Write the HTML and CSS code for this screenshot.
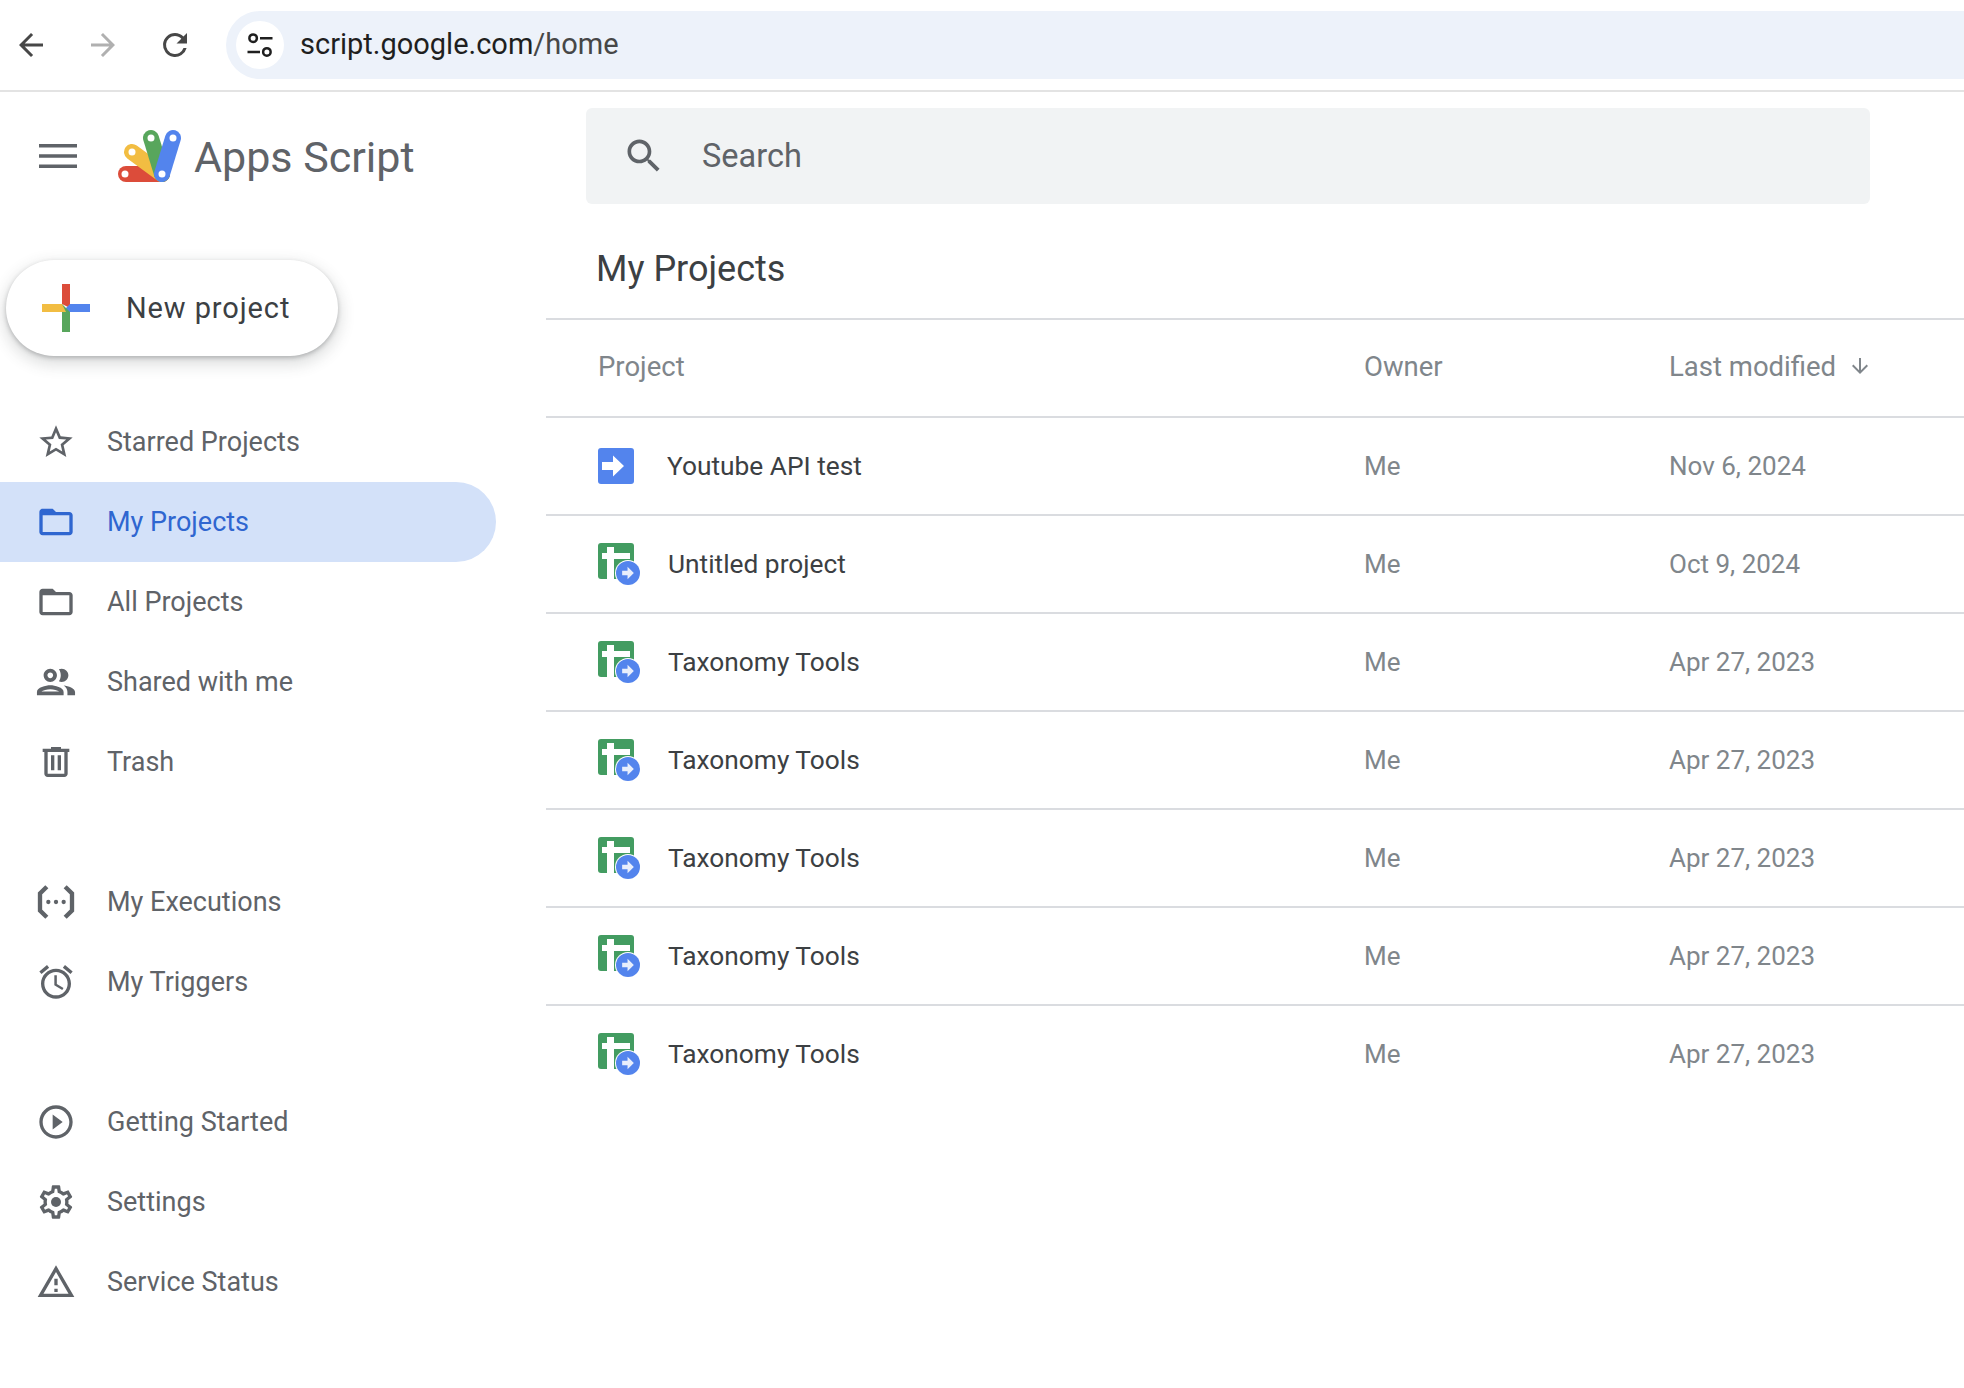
FILE: index.html
```html
<!DOCTYPE html>
<html lang="en">
<head>
    <meta charset="UTF-8">
    <meta name="viewport" content="width=device-width, initial-scale=1.0">
    <title>Apps Script</title>
    <link rel="stylesheet" href="styles.css">
</head>
<body>

    <svg class="icon-defs" width="0" height="0" aria-hidden="true">
        <symbol id="i-star" viewBox="0 0 24 24"><path d="M22 9.24l-7.19-.62L12 2 9.19 8.63 2 9.24l5.46 4.73L5.82 21 12 17.27 18.18 21l-1.63-7.03L22 9.24zM12 15.4l-3.76 2.27 1-4.28-3.32-2.88 4.38-.38L12 6.1l1.71 4.04 4.38.38-3.32 2.88 1 4.28L12 15.4z"/></symbol>
        <symbol id="i-folder" viewBox="0 0 24 24"><path d="M20 6h-8l-2-2H4c-1.1 0-1.99.9-1.99 2L2 18c0 1.1.9 2 2 2h16c1.1 0 2-.9 2-2V8c0-1.1-.9-2-2-2zm0 12H4V8h16v10z"/></symbol>
        <symbol id="i-people" viewBox="1.5 1.5 21 21"><path d="M9 13.75c-2.34 0-7 1.17-7 3.5V19h14v-1.75c0-2.33-4.66-3.5-7-3.5zM4.34 17c.84-.58 2.87-1.25 4.66-1.25s3.82.67 4.66 1.25H4.34zM9 12c1.93 0 3.5-1.57 3.5-3.5S10.93 5 9 5 5.5 6.57 5.5 8.5 7.07 12 9 12zm0-5c.83 0 1.5.67 1.5 1.5S9.83 10 9 10s-1.5-.67-1.5-1.5S8.17 7 9 7zm7.04 6.81c1.16.84 1.96 1.96 1.96 3.44V19h4v-1.75c0-2.02-3.5-3.17-5.96-3.44zM15 12c1.93 0 3.5-1.57 3.5-3.5S16.93 5 15 5c-.54 0-1.04.13-1.5.35.63.89 1 1.98 1 3.15s-.37 2.26-1 3.15c.46.22.96.35 1.5.35z"/></symbol>
        <symbol id="i-trash" viewBox="0 0 24 24"><path d="M15 3H9v1H4v2h1v13c0 1.1.9 2 2 2h10c1.1 0 2-.9 2-2V6h1V4h-5V3zm2 16H7V6h10v13zM9 8h2v9H9V8zm4 0h2v9h-2V8z"/></symbol>
        <symbol id="i-exec" viewBox="0 0 24 24"><path d="M6.5 2.8L2.4 6.9v10.2l4.1 4.1M17.5 2.8l4.1 4.1v10.2l-4.1 4.1" fill="none" stroke="currentColor" stroke-width="2.6"/><circle cx="7.4" cy="12" r="1.3"/><circle cx="12" cy="12" r="1.3"/><circle cx="16.6" cy="12" r="1.3"/></symbol>
        <symbol id="i-alarm" viewBox="0 0 24 24"><path d="M22 5.72l-4.6-3.86-1.29 1.53 4.6 3.86L22 5.72zM7.88 3.39L6.6 1.86 2 5.71l1.29 1.53 4.59-3.85zM12.5 8H11v6l4.75 2.85.75-1.23-4-2.37V8zM12 4c-4.97 0-9 4.03-9 9s4.02 9 9 9c4.97 0 9-4.03 9-9s-4.03-9-9-9zm0 16c-3.87 0-7-3.13-7-7s3.13-7 7-7 7 3.13 7 7-3.13 7-7 7z"/></symbol>
        <symbol id="i-play" viewBox="0 0 24 24"><path d="M10 16.5l6-4.5-6-4.5v9zM12 2C6.48 2 2 6.48 2 12s4.48 10 10 10 10-4.48 10-10S17.52 2 12 2zm0 18c-4.41 0-8-3.59-8-8s3.59-8 8-8 8 3.59 8 8-3.59 8-8 8z"/></symbol>
        <symbol id="i-gear" viewBox="0 0 24 24"><path d="M19.43 12.98c.04-.32.07-.64.07-.98 0-.34-.03-.66-.07-.98l2.11-1.65c.19-.15.24-.42.12-.64l-2-3.46c-.09-.16-.26-.25-.44-.25-.06 0-.12.01-.17.03l-2.49 1c-.52-.4-1.08-.73-1.69-.98l-.38-2.65C14.46 2.18 14.25 2 14 2h-4c-.25 0-.46.18-.49.42l-.38 2.65c-.61.25-1.17.59-1.69.98l-2.49-1c-.06-.02-.12-.03-.18-.03-.17 0-.34.09-.43.25l-2 3.46c-.13.22-.07.49.12.64l2.11 1.65c-.04.32-.07.65-.07.98 0 .33.03.66.07.98l-2.11 1.65c-.19.15-.24.42-.12.64l2 3.46c.09.16.26.25.44.25.06 0 .12-.01.17-.03l2.49-1c.52.4 1.08.73 1.69.98l.38 2.65c.03.24.24.42.49.42h4c.25 0 .46-.18.49-.42l.38-2.65c.61-.25 1.17-.59 1.69-.98l2.49 1c.06.02.12.03.18.03.17 0 .34-.09.43-.25l2-3.46c.12-.22.07-.49-.12-.64l-2.11-1.65zm-1.98-1.71c.04.31.05.52.05.73 0 .21-.02.43-.05.73l-.14 1.13.89.7 1.08.84-.7 1.21-1.27-.51-1.04-.42-.9.68c-.43.32-.84.56-1.25.73l-1.06.43-.16 1.13-.2 1.35h-1.4l-.19-1.35-.16-1.13-1.06-.43c-.43-.18-.83-.41-1.23-.71l-.91-.7-1.06.43-1.27.51-.7-1.21 1.08-.84.89-.7-.14-1.13c-.03-.31-.05-.54-.05-.74s.02-.43.05-.73l.14-1.13-.89-.7-1.08-.84.7-1.21 1.27.51 1.04.42.9-.68c.43-.32.84-.56 1.25-.73l1.06-.43.16-1.13.2-1.35h1.39l.19 1.35.16 1.13 1.06.43c.43.18.83.41 1.23.71l.91.7 1.06-.43 1.27-.51.7 1.21-1.07.85-.89.7.14 1.13z"/><circle cx="12" cy="12" r="3"/></symbol>
        <symbol id="i-warn" viewBox="0 0 24 24"><path d="M12 5.99L19.53 19H4.47L12 5.99M12 2L1 21h22L12 2zm1 14h-2v2h2v-2zm0-6h-2v4h2v-4z"/></symbol>
        <symbol id="i-script" viewBox="0 0 36 36"><rect width="36" height="36" rx="3" fill="#5384ed"/><path d="M4 14h11V7.5L26 18 15 28.5V22H4z" fill="#fff"/></symbol>
        <symbol id="i-sheet" viewBox="0 0 42 42"><rect width="36" height="36" rx="3" fill="#439c61"/><path d="M9 4h7v6h16v6H16v20H9V16H4v-6h5z" fill="#fff"/><circle cx="30" cy="30" r="13" fill="#fff"/><circle cx="30" cy="30" r="12" fill="#5384ed"/><path d="M23.5 27.5h6V23l7 7-7 7v-4.5h-6z" transform="translate(3 3) scale(.9)" fill="#e8eefc"/></symbol>
    </svg>

    <div class="toolbar">
        <svg class="tb-icon" viewBox="0 0 24 24"><path d="M20 11H7.8l5.6-5.600L12 4l-8 8 8 8 1.400-1.400L7.800 13H20z"/></svg>
        <svg class="tb-icon tb-disabled" viewBox="0 0 24 24"><path d="M4 11h12.200l-5.600-5.600L12 4l8 8-8 8-1.400-1.400 5.600-5.600H4z"/></svg>
        <svg class="tb-icon" viewBox="0 0 24 24"><path d="M17.650 6.350A7.960 7.960 0 0 0 12 4a8 8 0 1 0 7.750 10h-2.080A6 6 0 1 1 12 6c1.660 0 3.140.69 4.220 1.780L13 11h7V4z"/></svg>
        <div class="address-bar">
            <span class="site-badge">
                <svg viewBox="0 0 24 24" width="30" height="30" fill="none" stroke="#1f1f1f" stroke-width="2"><circle cx="6.5" cy="6.5" r="3"/><path d="M12 6.5h10M2 17.5h10"/><circle cx="17.5" cy="17.5" r="3"/></svg>
            </span>
            <span class="url">script.google.com<span class="url-path">/home</span></span>
        </div>
    </div>

    <div class="app">
        <div class="sidebar">
            <div class="brand">
                <svg class="menu-icon" viewBox="0 0 38 24"><path d="M0 0h38v3.500H0zM0 10.250h38v3.500H0zM0 20.500h38V24H0z"/></svg>
                <svg class="logo" viewBox="0 0 64 54" fill="none" stroke-width="16" stroke-linecap="round">
                    <path d="M8 45H44" stroke="#dc4c3a"/>
                    <path d="M14 23L44 45" stroke="#f2bd42"/>
                    <path d="M33 9L44 45" stroke="#58a65c"/>
                    <path d="M55 9L44 45" stroke="#5384ed"/>
                    <g fill="#fff">
                        <circle cx="7" cy="45" r="3.5"/>
                        <circle cx="14" cy="23" r="3.5"/>
                        <circle cx="33" cy="9" r="3.5"/>
                        <circle cx="55" cy="9" r="3.5"/>
                        <circle cx="44" cy="45" r="3.5"/>
                    </g>
                </svg>
                <span class="brand-name">Apps Script</span>
            </div>

            <button class="new-project">
                <svg class="plus" viewBox="0 0 48 48">
                    <path d="M20 0h8v24l-8-4z" fill="#dc4c3a"/>
                    <path d="M48 20v8H20l8-8z" fill="#5384ed"/>
                    <path d="M28 48h-8V20l8 8z" fill="#58a65c"/>
                    <path d="M0 28v-8h20l4 8z" fill="#f2bd42"/>
                </svg>
                New project
            </button>

            <div class="nav-group">
                <a class="nav-item"><svg class="nav-icon"><use href="#i-star"/></svg>Starred Projects</a>
                <a class="nav-item active"><svg class="nav-icon"><use href="#i-folder"/></svg>My Projects</a>
                <a class="nav-item"><svg class="nav-icon"><use href="#i-folder"/></svg>All Projects</a>
                <a class="nav-item"><svg class="nav-icon"><use href="#i-people"/></svg>Shared with me</a>
                <a class="nav-item"><svg class="nav-icon"><use href="#i-trash"/></svg>Trash</a>
            </div>
            <div class="nav-group">
                <a class="nav-item"><svg class="nav-icon"><use href="#i-exec"/></svg>My Executions</a>
                <a class="nav-item"><svg class="nav-icon"><use href="#i-alarm"/></svg>My Triggers</a>
            </div>
            <div class="nav-group">
                <a class="nav-item"><svg class="nav-icon"><use href="#i-play"/></svg>Getting Started</a>
                <a class="nav-item"><svg class="nav-icon"><use href="#i-gear"/></svg>Settings</a>
                <a class="nav-item"><svg class="nav-icon"><use href="#i-warn"/></svg>Service Status</a>
            </div>
        </div>

        <div class="main">
            <div class="search-wrap">
                <div class="search">
                    <svg class="search-icon" viewBox="0 0 24 24"><path d="M15.5 14h-.79l-.28-.27C15.41 12.59 16 11.11 16 9.5 16 5.91 13.09 3 9.500 3S3 5.910 3 9.500 5.910 16 9.500 16c1.610 0 3.090-.59 4.230-1.570l.27.28v.79l5 4.990L20.490 19l-4.990-5zm-6 0C7.010 14 5 11.990 5 9.500S7.010 5 9.500 5 14 7.010 14 9.500 11.990 14 9.500 14z"/></svg>
                    <span>Search</span>
                </div>
            </div>

            <h1 class="page-title">My Projects</h1>

            <div class="row head-row">
                <div>Project</div>
                <div>Owner</div>
                <div class="sort-col">Last modified
                    <svg class="sort-icon" viewBox="0 0 24 24"><path d="M20 12l-1.410-1.410L13 16.170V4h-2v12.170l-5.580-5.590L4 12l8 8 8-8z"/></svg>
                </div>
            </div>

            <div class="row">
                <div class="name-cell"><svg class="file-icon script-icon"><use href="#i-script"/></svg>Youtube API test</div>
                <div>Me</div>
                <div>Nov 6, 2024</div>
            </div>
            <div class="row">
                <div class="name-cell"><svg class="file-icon"><use href="#i-sheet"/></svg>Untitled project</div>
                <div>Me</div>
                <div>Oct 9, 2024</div>
            </div>
            <div class="row">
                <div class="name-cell"><svg class="file-icon"><use href="#i-sheet"/></svg>Taxonomy Tools</div>
                <div>Me</div>
                <div>Apr 27, 2023</div>
            </div>
            <div class="row">
                <div class="name-cell"><svg class="file-icon"><use href="#i-sheet"/></svg>Taxonomy Tools</div>
                <div>Me</div>
                <div>Apr 27, 2023</div>
            </div>
            <div class="row">
                <div class="name-cell"><svg class="file-icon"><use href="#i-sheet"/></svg>Taxonomy Tools</div>
                <div>Me</div>
                <div>Apr 27, 2023</div>
            </div>
            <div class="row">
                <div class="name-cell"><svg class="file-icon"><use href="#i-sheet"/></svg>Taxonomy Tools</div>
                <div>Me</div>
                <div>Apr 27, 2023</div>
            </div>
            <div class="row last-row">
                <div class="name-cell"><svg class="file-icon"><use href="#i-sheet"/></svg>Taxonomy Tools</div>
                <div>Me</div>
                <div>Apr 27, 2023</div>
            </div>
        </div>
    </div>

</body>
</html>
```

FILE: styles.css
```css
body {
    font-family: Roboto, "Liberation Sans", sans-serif;
    background-color: white;
    margin: 0;
    padding: 0;
    color: #5f6368;
    height: 1388px;
    overflow: hidden;
}

.icon-defs {
    display: block;
}

/* browser bar */
.toolbar {
    display: flex;
    align-items: center;
    height: 90px;
    padding-left: 13px;
    border-bottom: 2px solid #e3e3e3;
    box-sizing: content-box;
}

.tb-icon {
    width: 36px;
    height: 36px;
    margin-right: 36px;
    fill: #474747;
}

.tb-disabled {
    fill: #b0b0b0;
}

.address-bar {
    display: flex;
    align-items: center;
    flex: 1;
    height: 68px;
    margin-left: -3px;
    padding-left: 10px;
    background-color: #edf2fa;
    border-radius: 34px 0 0 34px;
}

.site-badge {
    display: flex;
    align-items: center;
    justify-content: center;
    width: 48px;
    height: 48px;
    background-color: white;
    border-radius: 50%;
    margin-right: 16px;
}

.url {
    font-size: 29px;
    line-height: 34px;
    margin-top: -2px;
    color: #1f1f1f;
}

.url-path {
    color: #474747;
}

/* page */
.app {
    display: flex;
}

.sidebar {
    width: 546px;
    flex-shrink: 0;
}

.brand {
    display: flex;
    align-items: center;
    height: 104px;
    padding-left: 39px;
    margin-top: 12px;
}

.menu-icon {
    width: 38px;
    height: 24px;
    fill: #5f6368;
    margin-right: 41px;
}

.logo {
    width: 64px;
    height: 54px;
    margin-right: 12px;
}

.brand-name {
    padding-top: 2px;
    font-size: 43px;
    color: #5f6368;
}

.new-project {
    display: flex;
    align-items: center;
    width: 332px;
    height: 96px;
    margin: 52px 0 0 6px;
    padding: 0 0 0 36px;
    font-family: inherit;
    font-size: 29px;
    font-weight: 400;
    letter-spacing: 0.9px;
    color: #3c4043;
    background-color: white;
    border: none;
    border-radius: 48px;
    box-shadow: 0 2px 4px rgba(60, 64, 67, 0.3), 0 6px 14px 4px rgba(60, 64, 67, 0.15);
}

.plus {
    width: 48px;
    height: 48px;
    margin-right: 36px;
}

.nav-group {
    margin-bottom: 60px;
}

.new-project + .nav-group {
    margin-top: 46px;
}

.nav-item {
    display: flex;
    align-items: center;
    width: 496px;
    height: 80px;
    box-sizing: border-box;
    padding-left: 36px;
    font-size: 27px;
    color: #5f6368;
    border-radius: 0 40px 40px 0;
}

.nav-icon {
    width: 40px;
    height: 40px;
    margin-right: 31px;
    fill: #5f6368;
    color: #5f6368;
}

.nav-item.active {
    background-color: #d3e1f9;
    color: #2f66d0;
}

.active .nav-icon {
    fill: #2f66d0;
}

.main {
    flex: 1;
}

.search-wrap {
    padding: 16px 94px 0 40px;
}

.search {
    display: flex;
    align-items: center;
    height: 96px;
    padding-left: 36px;
    font-size: 32.5px;
    color: #5f6368;
    background-color: #f1f3f4;
    border-radius: 6px;
}

.search-icon {
    width: 44px;
    height: 44px;
    fill: #5f6368;
    margin-right: 36px;
}

.page-title {
    margin: 0;
    height: 116px;
    padding: 39px 0 0 50px;
    box-sizing: border-box;
    font-size: 36px;
    line-height: 52px;
    font-weight: 400;
    color: #3c4043;
    border-bottom: 2px solid #dadce0;
}

.row {
    display: grid;
    grid-template-columns: 766px 305px 1fr;
    align-items: center;
    height: 98px;
    box-sizing: border-box;
    padding-left: 52px;
    font-size: 26px;
    color: #80868b;
    border-bottom: 2px solid #dadce0;
}

.head-row {
    padding-bottom: 4px;
    font-size: 27.5px;
}

.last-row {
    border-bottom-color: transparent;
}

.name-cell {
    display: flex;
    align-items: center;
    font-size: 26.3px;
    font-weight: 450;
    color: #3c4043;
}

.file-icon {
    width: 42px;
    height: 42px;
    margin-right: 28px;
}

.script-icon {
    width: 36px;
    height: 36px;
    margin-right: 33px;
}

.sort-col {
    display: flex;
    align-items: center;
}

.sort-icon {
    width: 24px;
    height: 24px;
    margin-left: 12px;
    fill: #80868b;
}
```
